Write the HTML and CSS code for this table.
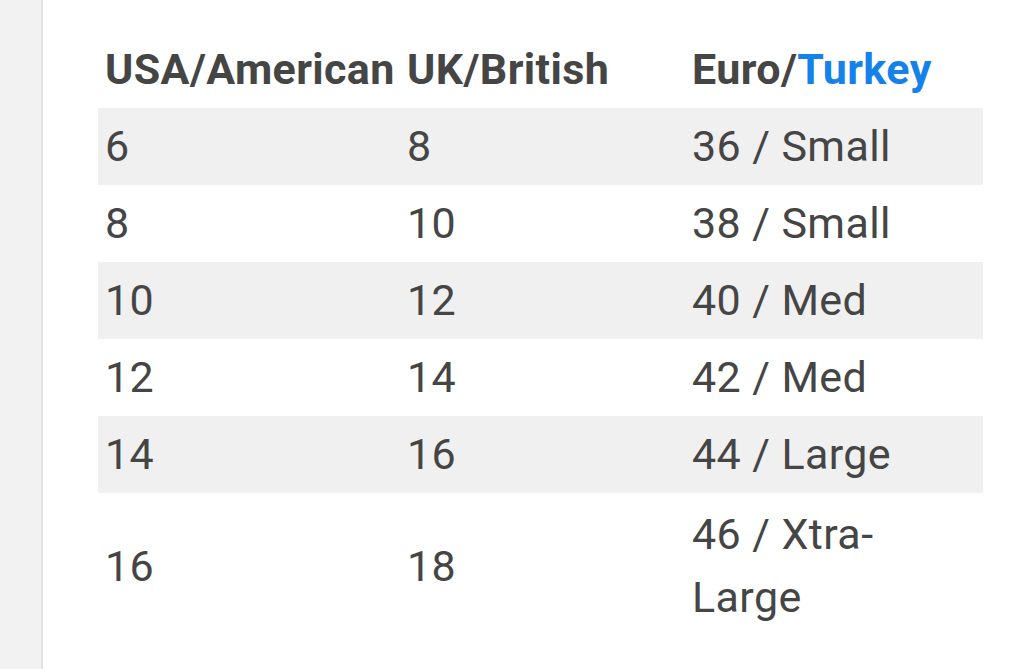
FILE: index.html
```html
<!DOCTYPE html>
<html>
<head>
<meta charset="utf-8">
<link rel="stylesheet" href="styles.css">
</head>
<body>
<div class="page">
  <aside class="side"></aside>
  <main class="content">
    <table class="sizes">
      <colgroup>
        <col class="c1"><col class="c2"><col class="c3">
      </colgroup>
      <thead>
        <tr><th>USA/American</th><th>UK/British</th><th>Euro/<span class="hl">Turkey</span></th></tr>
      </thead>
      <tbody>
        <tr><td>6</td><td>8</td><td>36 / Small</td></tr>
        <tr><td>8</td><td>10</td><td>38 / Small</td></tr>
        <tr><td>10</td><td>12</td><td>40 / Med</td></tr>
        <tr><td>12</td><td>14</td><td>42 / Med</td></tr>
        <tr><td>14</td><td>16</td><td>44 / Large</td></tr>
        <tr class="tall"><td>16</td><td>18</td><td>46 / Xtra-Large</td></tr>
      </tbody>
    </table>
  </main>
</div>
</body>
</html>
```

FILE: styles.css
```css
html, body {
  margin: 0;
  padding: 0;
  background: #ffffff;
  font-family: Roboto, "Liberation Sans", sans-serif;
  color: #454545;
}
.page {
  display: flex;
  min-height: 669px;
}
.side {
  width: 41px;
  flex: none;
  background: #f2f2f2;
  border-right: 2px solid #e3e3e3;
}
.content {
  flex: 1;
  padding: 31px 0 0 55px;
}
.sizes {
  border-collapse: collapse;
  table-layout: fixed;
  width: 885px;
  font-size: 43px;
  line-height: 63px;
  letter-spacing: 0.4px;
}
.c1 { width: 302px; }
.c2 { width: 285px; }
.c3 { width: 298px; }
.sizes th, .sizes td {
  padding: 7px 7px;
  text-align: left;
  vertical-align: middle;
}
.sizes th:last-child, .sizes td:last-child {
  padding-right: 24px;
}
.sizes th {
  font-weight: 700;
  white-space: nowrap;
}
.sizes td {
  font-weight: 400;
}
.sizes tbody tr:nth-child(odd) {
  background: #f0f0f0;
}
.sizes .tall td {
  padding-top: 10px;
}
.hl {
  color: #1582e9;
}
```
